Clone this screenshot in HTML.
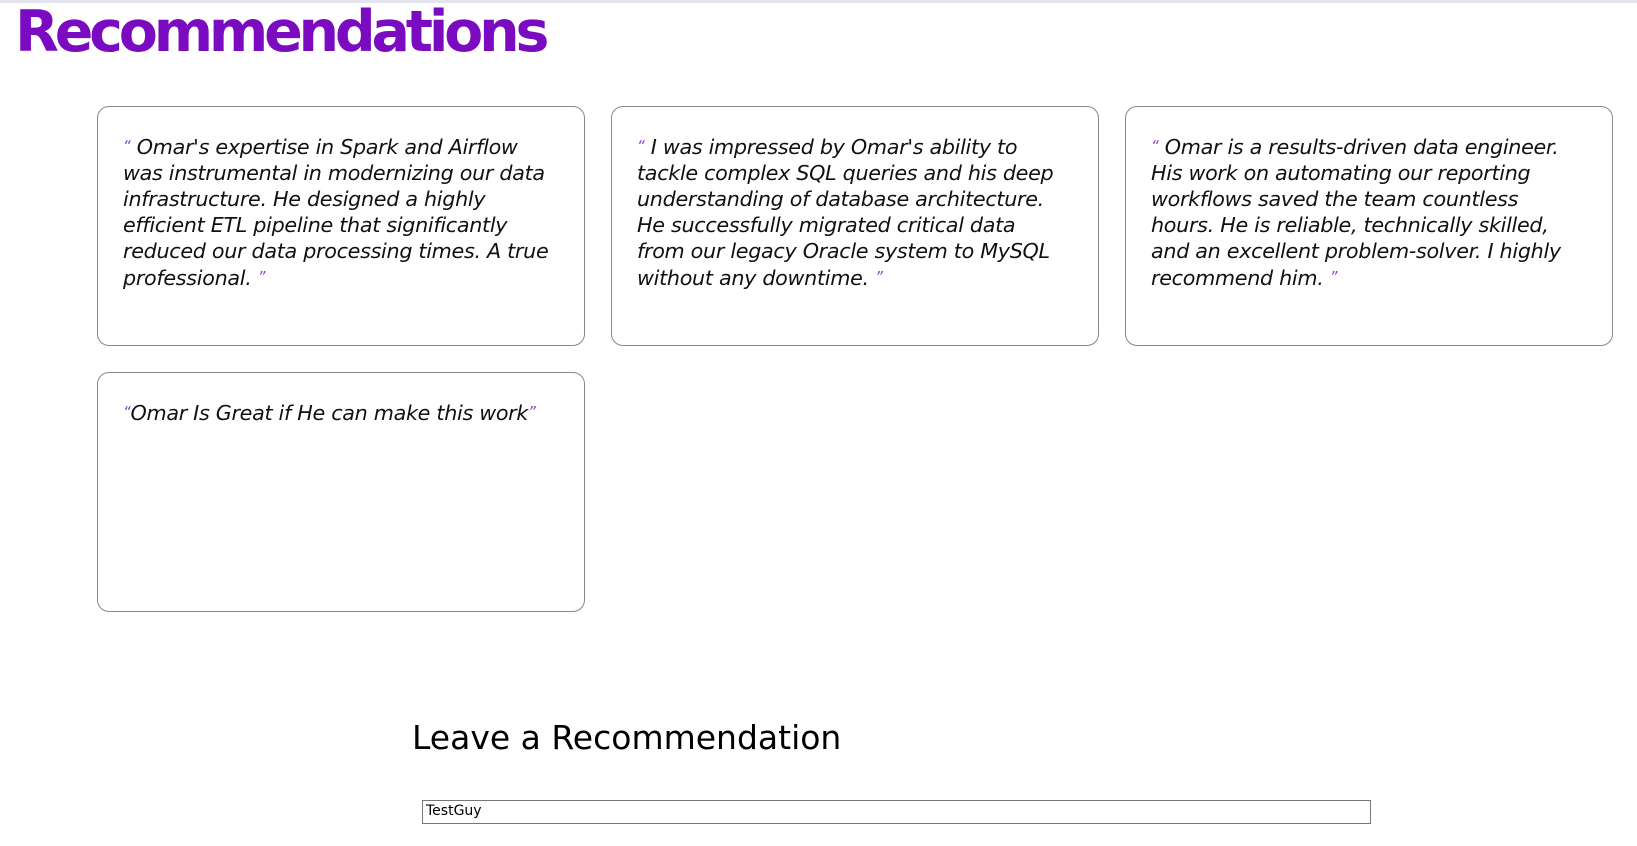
<!DOCTYPE html>
<html><head><style>
body{margin:0;background:#fff;width:1637px;height:846px;overflow:hidden;font-family:"DejaVu Sans","Liberation Sans",sans-serif;position:relative}
.top{position:absolute;left:0;top:0;width:1637px;height:3px;background:#e4e4ee}
h1{position:absolute;left:15px;top:-1px;margin:0;font-size:57px;font-weight:bold;color:#7a0bc0;letter-spacing:-4.2px}
.card{position:absolute;width:488px;height:240px;border:1px solid #888;border-radius:12px;box-sizing:border-box;padding:26px 30px 26px 25px;font-style:italic;font-size:20.7px;line-height:26px;color:#111;letter-spacing:-0.3px}
.q{color:#8a3fc8;font-size:15px;vertical-align:3px}
h2{position:absolute;left:412px;top:718px;margin:0;font-weight:normal;font-size:33px;color:#000}
.inp{position:absolute;left:422px;top:800px;width:949px;height:24px;border:1px solid #777;box-sizing:border-box;font-size:14px;padding:2px 3px;color:#000}
</style></head><body>
<div class="top"></div>
<h1>Recommendations</h1>
<div class="card" style="left:97px;top:106px"><span class="q">“</span> Omar's expertise in Spark and Airflow was instrumental in modernizing our data infrastructure. He designed a highly efficient ETL pipeline that significantly reduced our data processing times. A true professional. <span class="q">”</span></div>
<div class="card" style="left:611px;top:106px"><span class="q">“</span> I was impressed by Omar's ability to tackle complex SQL queries and his deep understanding of database architecture. He successfully migrated critical data from our legacy Oracle system to MySQL without any downtime. <span class="q">”</span></div>
<div class="card" style="left:1125px;top:106px"><span class="q">“</span> Omar is a results-driven data engineer. His work on automating our reporting workflows saved the team countless hours. He is reliable, technically skilled, and an excellent problem-solver. I highly recommend him. <span class="q">”</span></div>
<div class="card" style="left:97px;top:372px"><span class="q">“</span>Omar Is Great if He can make this work<span class="q">”</span></div>
<h2>Leave a Recommendation</h2>
<div class="inp">TestGuy</div>
</body></html>
